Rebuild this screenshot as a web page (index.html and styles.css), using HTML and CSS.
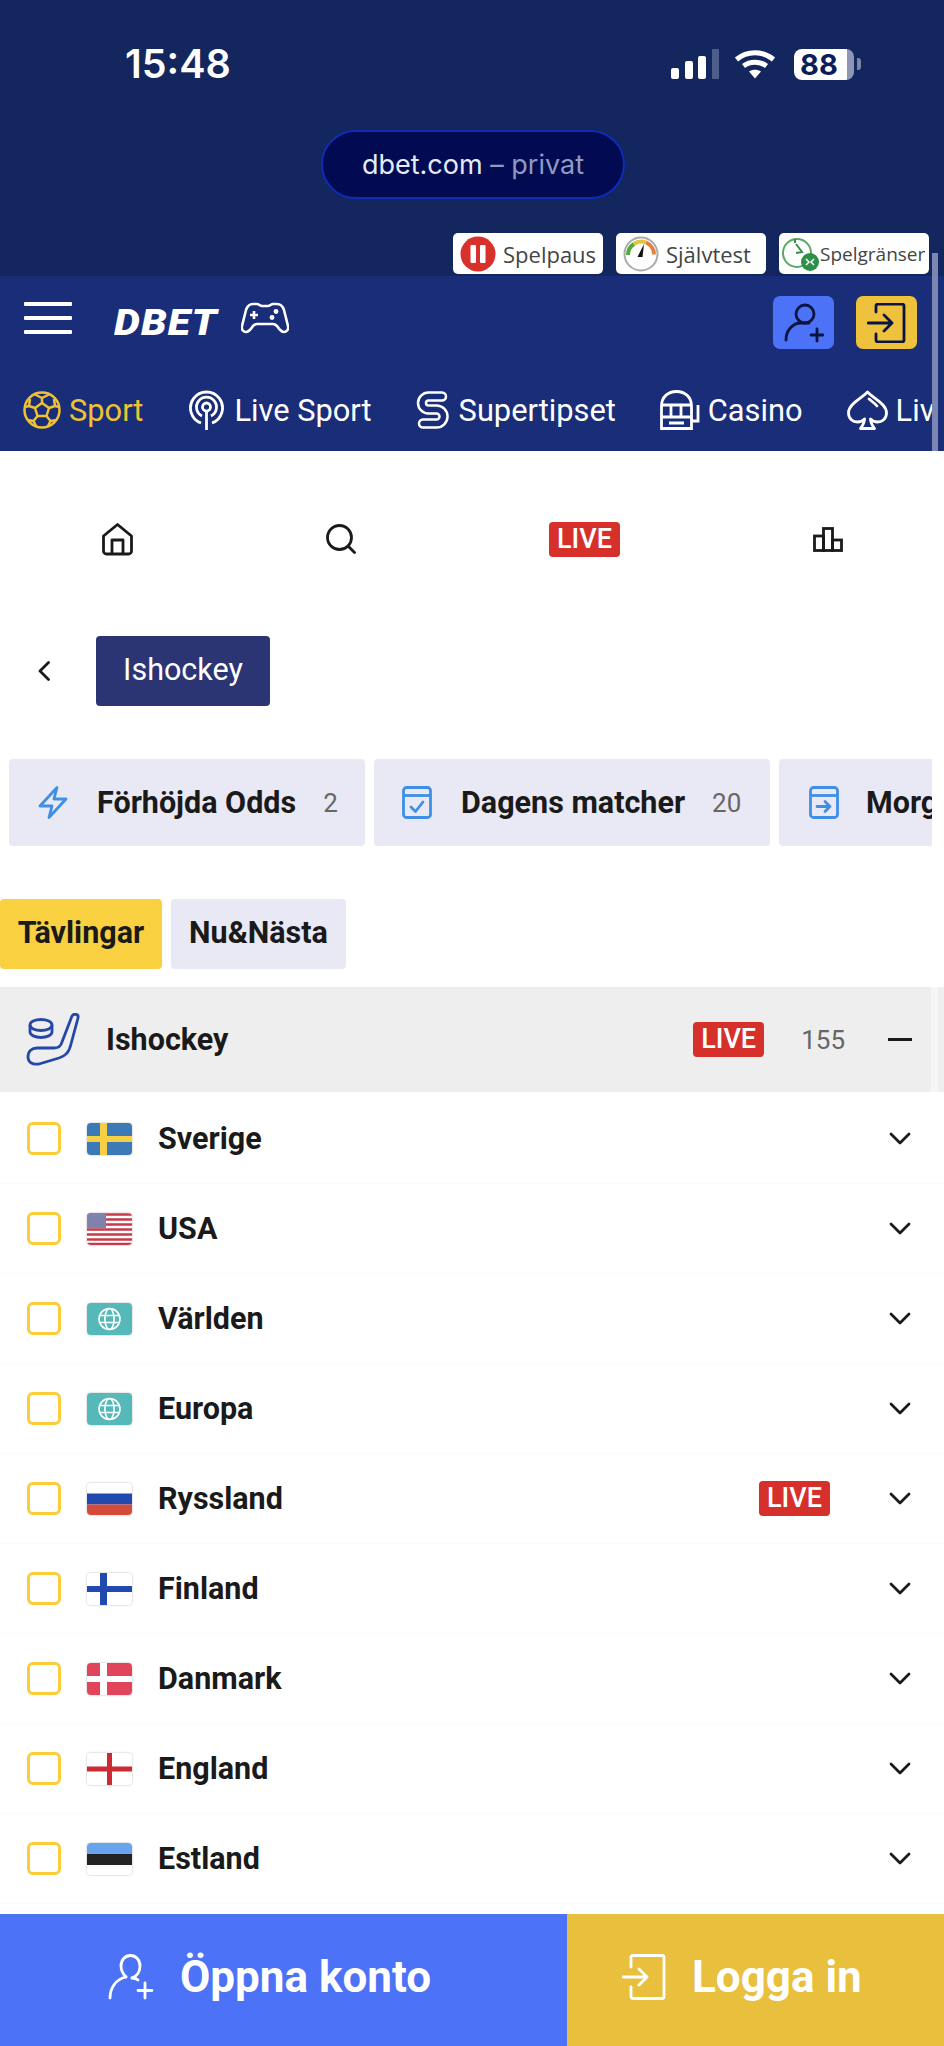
FILE: index.html
```html
<!DOCTYPE html>
<html lang="sv">
<head>
  <meta charset="UTF-8" />
  <meta name="viewport" content="width=device-width, initial-scale=1.0"/>
  <title>DBET - Ishockey</title>
  <link rel="stylesheet" href="styles.css">
</head>
<body>
  <svg class="defs" width="0" height="0">
    <symbol id="chevron" viewBox="0 0 22 14"><path d="M2 2l9 9 9-9" fill="none" stroke="#1a1a1a" stroke-width="2.8" stroke-linecap="round" stroke-linejoin="round"/></symbol>
    <symbol id="globe" viewBox="0 0 45 32">
      <rect width="45" height="32" fill="#55b8b9"/>
      <g fill="none" stroke="#fff" stroke-width="1.6"><circle cx="22.5" cy="16" r="10.5"/><ellipse cx="22.5" cy="16" rx="4.6" ry="10.5"/><path d="M12.5 12.5h20M12.5 19.5h20"/></g>
    </symbol>
  </svg>

  <div class="top">
    <div class="status">
      <span class="time">15:48</span>
      <div class="status-icons">
        <svg class="signal" width="48" height="30" viewBox="0 0 48 30">
          <rect x="0" y="19" width="8" height="11" rx="2" fill="#fff"/>
          <rect x="14" y="12" width="8" height="18" rx="2" fill="#fff"/>
          <rect x="27" y="7" width="8" height="23" rx="2" fill="#fff"/>
          <rect x="41" y="0" width="7" height="30" rx="1" fill="#4e5d8c"/>
        </svg>
        <svg class="wifi" width="42" height="30" viewBox="0 0 42 30">
          <g fill="none" stroke="#fff" stroke-width="5" stroke-linecap="butt">
            <path d="M2.5 10.5c10.500-9 26.500-9 37 0"/>
            <path d="M9.500 17c6.500-5 16.500-5 23 0"/>
          </g>
          <path d="M15 22.500c3.500-2.500 8.500-2.500 12 0l-6 7z" fill="#fff"/>
        </svg>
        <span class="battery">88</span>
        <span class="battery-nub"></span>
      </div>
    </div>
    <div class="url-pill">dbet.com <span class="url-private">– privat</span></div>
    <div class="badges">
      <div class="badge">
        <svg width="36" height="36" viewBox="0 0 36 36"><circle cx="18" cy="18" r="17.500" fill="#d8302a"/><rect x="10.500" y="9" width="5.500" height="18" rx="1" fill="#fff"/><rect x="20" y="9" width="5.500" height="18" rx="1" fill="#fff"/></svg>
        <span>Spelpaus</span>
      </div>
      <div class="badge">
        <svg width="36" height="36" viewBox="0 0 36 36">
          <circle cx="18" cy="18" r="16.500" fill="#fff" stroke="#a9aca6" stroke-width="2"/>
          <path d="M5 19a13 13 0 0 1 6-11" fill="none" stroke="#58a83e" stroke-width="4"/>
          <path d="M11 8a13 13 0 0 1 12-1.500" fill="none" stroke="#e7c53a" stroke-width="4"/>
          <path d="M23 6.500a13 13 0 0 1 8 12" fill="none" stroke="#e5813a" stroke-width="4"/>
          <path d="M21 8l-1.500 13h-5z" fill="#111"/>
        </svg>
        <span>Självtest</span>
      </div>
      <div class="badge badge-narrow">
        <svg width="38" height="36" viewBox="0 0 38 36">
          <circle cx="15" cy="17" r="14" fill="#fff" stroke="#57a868" stroke-width="2"/>
          <path d="M14 8l6 8-6 1M13 3v4" fill="none" stroke="#3a8c4e" stroke-width="2"/>
          <circle cx="28" cy="26" r="9" fill="#2e8f48"/>
          <path d="M24 23l3 3-3 3M32 23l-3 3 3 3" fill="none" stroke="#fff" stroke-width="1.500"/>
        </svg>
        <span>Spelgränser</span>
      </div>
    </div>
  </div>

  <header class="site-header">
    <div class="header-row">
      <div class="hamburger"><span></span><span></span><span></span></div>
      <span class="logo">DBET</span>
      <svg class="gamepad" width="48" height="32" viewBox="0 0 48 32">
        <path d="M12 2h4c2 0 3 2 5 2h6c2 0 3-2 5-2h4c4 0 6 3 7 6l4 16c1 4-2 6-4 6-3 0-5-3-7-6-1-1-2-2-4-2H16c-2 0-3 1-4 2-2 3-4 6-7 6-2 0-5-2-4-6L5 8c1-3 3-6 7-6z" fill="none" stroke="#fff" stroke-width="2.600"/>
        <path d="M13 9v8M9 13h8" stroke="#fff" stroke-width="2.600"/>
        <circle cx="35" cy="9.500" r="2.400" fill="#fff"/><circle cx="31" cy="15.500" r="2.400" fill="#fff"/>
      </svg>
      <div class="header-buttons">
        <div class="square-btn square-blue">
          <svg width="40" height="42" viewBox="0 0 40 42"><g fill="none" stroke="#0b1440" stroke-width="2.800" stroke-linecap="round"><circle cx="21" cy="12" r="9"/><path d="M2 38c0-10 7-17 15-17h8"/><path d="M33 27v12M27 33h12"/></g></svg>
        </div>
        <div class="square-btn square-yellow">
          <svg width="40" height="40" viewBox="0 0 40 40"><g fill="none" stroke="#0b1440" stroke-width="2.800" stroke-linecap="round" stroke-linejoin="round"><path d="M9 9V3a2 2 0 0 1 2-2h24a2 2 0 0 1 2 2v34a2 2 0 0 1-2 2H11a2 2 0 0 1-2-2v-6"/><path d="M1 20h24M17 12l8 8-8 8"/></g></svg>
        </div>
      </div>
    </div>
    <nav class="main-nav">
      <a class="nav-item nav-active">
        <svg width="38" height="38" viewBox="0 0 38 38"><g fill="none" stroke="#efc232" stroke-width="2.500" stroke-linejoin="round"><circle cx="19" cy="19" r="17.500"/><path d="M19 12l7 5-2.500 8h-9L12 17z"/><path d="M19 12V7M26 17l6-2M23.500 25l4 5M14.500 25l-4 5M12 17l-6-2M12 3.500L19 7l7-3.500M32 15l4 1M32 15l-1-7M27.500 30l6-1M27.500 30l-3 6M10.500 30l-6-1M10.500 30l3 6M6 15l-4 1M6 15l1-7"/></g></svg>
        <span>Sport</span>
      </a>
      <a class="nav-item nav-wide">
        <svg width="35" height="40" viewBox="0 0 35 40"><g fill="none" stroke="#fff" stroke-width="2.800"><path d="M12 33a16 16 0 1 1 11 0"/><path d="M13 26a10 10 0 1 1 9 0"/><circle cx="17.500" cy="17" r="4"/><path d="M17.500 21v19"/></g></svg>
        <span>Live Sport</span>
      </a>
      <a class="nav-item nav-wide nav-super">
        <svg width="33" height="40" viewBox="0 0 33 40"><g fill="none" stroke-linecap="round" stroke-linejoin="round"><path d="M26 6.500H12.500a6.500 6.500 0 0 0 0 13h8a7 7 0 0 1 0 14H7" stroke="#fff" stroke-width="10.500"/><path d="M26 6.500H12.500a6.500 6.500 0 0 0 0 13h8a7 7 0 0 1 0 14H7" stroke="#1a2d78" stroke-width="5.500"/></g></svg>
        <span>Supertipset</span>
      </a>
      <a class="nav-item nav-casino">
        <svg width="40" height="40" viewBox="0 0 40 40"><g fill="none" stroke="#fff" stroke-width="2.800"><path d="M1.500 38.500V16C1.500 7 8 1.500 16.500 1.500S31.500 7 31.500 16v22.500z"/><path d="M1.500 15h30M1.500 27h30M11 15v12M21 15v12M9 33h15"/><path d="M31.500 31H38V15"/></g></svg>
        <span>Casino</span>
      </a>
      <a class="nav-item nav-spade">
        <svg width="41" height="40" viewBox="0 0 41 40"><g fill="none" stroke="#fff" stroke-width="2.800" stroke-linejoin="round"><path d="M20.500 2C27 9 39.500 14 39.500 23c0 6-4.500 9-9 9-3 0-5-1-7-3 0 4 1.500 6 4 9.500h-14c2.500-3.500 4-5.500 4-9.500-2 2-4 3-7 3-4.500 0-9-3-9-9C1.500 14 14 9 20.500 2z"/><path d="M22 9c3 2.500 6 4.500 8 7" stroke-linecap="round"/></g></svg>
        <span>Live</span>
      </a>
    </nav>
  </header>
  <div class="scroll-thumb"></div>

  <div class="sub-nav">
    <svg width="31" height="33" viewBox="0 0 31 33"><g fill="none" stroke="#1a1a1a" stroke-width="2.800" stroke-linejoin="round"><path d="M1.500 13L15.500 1.500 29.500 13v15a3 3 0 0 1-3 3h-22a3 3 0 0 1-3-3z"/><path d="M10 31V17h11v14"/></g></svg>
    <svg width="30" height="30" viewBox="0 0 30 30"><g fill="none" stroke="#1a1a1a" stroke-width="2.800" stroke-linecap="round"><circle cx="13.500" cy="13.500" r="12"/><path d="M22 22l6.500 6.500"/></g></svg>
    <span class="live live-big">LIVE</span>
    <svg width="30" height="25" viewBox="0 0 30 25"><g fill="none" stroke="#1a1a1a" stroke-width="2.800"><rect x="1.500" y="9" width="9" height="14.500"/><rect x="10.500" y="1.500" width="9" height="22"/><rect x="19.500" y="13" width="9" height="10.500"/></g></svg>
  </div>

  <div class="breadcrumb">
    <svg width="14" height="20" viewBox="0 0 14 20"><path d="M11.500 1.500L3 10l8.500 8.500" fill="none" stroke="#1a1a1a" stroke-width="2.800" stroke-linecap="round" stroke-linejoin="round"/></svg>
    <span class="crumb">Ishockey</span>
  </div>

  <div class="chips">
    <div class="chip chip-first">
      <svg width="30" height="33" viewBox="0 0 30 33"><path d="M19 1.500L2 20h12l-3 11.500L28 13H16z" fill="none" stroke="#3f8fe6" stroke-width="2.800" stroke-linejoin="round"/></svg>
      <span class="chip-name">Förhöjda Odds</span>
      <span class="chip-count">2</span>
    </div>
    <div class="chip chip-second">
      <svg width="30" height="33" viewBox="0 0 30 33"><g fill="none" stroke="#3f8fe6" stroke-width="2.800" stroke-linejoin="round"><rect x="1.500" y="1.500" width="27" height="30" rx="3"/><path d="M1.500 9.500h27"/><path d="M9 21l4.500 4.500L21 16" stroke-linecap="round"/></g></svg>
      <span class="chip-name">Dagens matcher</span>
      <span class="chip-count">20</span>
    </div>
    <div class="chip chip-third">
      <svg width="30" height="33" viewBox="0 0 30 33"><g fill="none" stroke="#3f8fe6" stroke-width="2.800" stroke-linejoin="round"><rect x="1.500" y="1.500" width="27" height="30" rx="3"/><path d="M1.500 9.500h27"/><path d="M8 20.500h13M16 15.500l5 5-5 5" stroke-linecap="round"/></g></svg>
      <span class="chip-name">Morgondagens</span>
    </div>
  </div>

  <div class="tabs">
    <span class="tab tab-active">Tävlingar</span>
    <span class="tab">Nu&amp;Nästa</span>
  </div>

  <div class="sport-head">
    <svg width="54" height="53" viewBox="0 0 54 53"><g fill="none" stroke="#2548a8" stroke-width="2.800" stroke-linejoin="round"><path d="M46 3c2-3 7-2 6 2l-7 26c-2 9-6 12-12 14L13 51c-7 1-11-2-11-7 0-6 4-9 9-9h17c5 0 7-2 8-6z"/><ellipse cx="15" cy="12" rx="11" ry="5.500"/><path d="M4 12v7c0 3 5 5.500 11 5.500S26 22 26 19v-7"/></g></svg>
    <span class="sport-name">Ishockey</span>
    <span class="live">LIVE</span>
    <span class="sport-count">155</span>
    <span class="minus"></span>
  </div>
  <div class="side-strip"></div>

  <div class="list">
    <div class="row">
      <span class="check"></span>
      <svg class="flag" viewBox="0 0 45 32"><rect width="45" height="32" fill="#3b7ab7"/><path d="M13 0h7v32h-7zM0 13h45v6H0z" fill="#f6cf45"/></svg>
      <span class="name">Sverige</span>
      <svg class="chev" width="22" height="14"><use href="#chevron"/></svg>
    </div>
    <div class="row">
      <span class="check"></span>
      <svg class="flag" viewBox="0 0 45 32">
        <rect width="45" height="32" fill="#fff"/>
        <path d="M0 1.500h45M0 6.500h45M0 11.500h45M0 16.500h45M0 21.500h45M0 26.500h45M0 31h45" stroke="#c9394a" stroke-width="2.400"/>
        <rect width="19" height="15" fill="#7f82ad"/>
      </svg>
      <span class="name">USA</span>
      <svg class="chev" width="22" height="14"><use href="#chevron"/></svg>
    </div>
    <div class="row">
      <span class="check"></span>
      <svg class="flag" viewBox="0 0 45 32"><use href="#globe"/></svg>
      <span class="name">Världen</span>
      <svg class="chev" width="22" height="14"><use href="#chevron"/></svg>
    </div>
    <div class="row">
      <span class="check"></span>
      <svg class="flag" viewBox="0 0 45 32"><use href="#globe"/></svg>
      <span class="name">Europa</span>
      <svg class="chev" width="22" height="14"><use href="#chevron"/></svg>
    </div>
    <div class="row">
      <span class="check"></span>
      <svg class="flag" viewBox="0 0 45 32"><rect width="45" height="32" fill="#fff"/><rect y="10.500" width="45" height="11" fill="#2149b0"/><rect y="21.500" width="45" height="10.500" fill="#d44b3c"/></svg>
      <span class="name">Ryssland</span>
      <span class="live row-live">LIVE</span>
      <svg class="chev" width="22" height="14"><use href="#chevron"/></svg>
    </div>
    <div class="row">
      <span class="check"></span>
      <svg class="flag" viewBox="0 0 45 32"><rect width="45" height="32" fill="#fff"/><path d="M13 0h7v32h-7zM0 13h45v6H0z" fill="#2149b0"/></svg>
      <span class="name">Finland</span>
      <svg class="chev" width="22" height="14"><use href="#chevron"/></svg>
    </div>
    <div class="row">
      <span class="check"></span>
      <svg class="flag" viewBox="0 0 45 32"><rect width="45" height="32" fill="#e0455c"/><path d="M13 0h7v32h-7zM0 13h45v6H0z" fill="#fff"/></svg>
      <span class="name">Danmark</span>
      <svg class="chev" width="22" height="14"><use href="#chevron"/></svg>
    </div>
    <div class="row">
      <span class="check"></span>
      <svg class="flag" viewBox="0 0 45 32"><rect width="45" height="32" fill="#fff"/><path d="M20 0h5v32h-5zM0 13.500h45v5H0z" fill="#cc2b33"/></svg>
      <span class="name">England</span>
      <svg class="chev" width="22" height="14"><use href="#chevron"/></svg>
    </div>
    <div class="row">
      <span class="check"></span>
      <svg class="flag" viewBox="0 0 45 32"><rect width="45" height="32" fill="#fff"/><rect width="45" height="11" fill="#68a5ee"/><rect y="11" width="45" height="11" fill="#232323"/></svg>
      <span class="name">Estland</span>
      <svg class="chev" width="22" height="14"><use href="#chevron"/></svg>
    </div>
  </div>

  <div class="bottom-bar">
    <div class="bottom-btn bottom-blue">
      <svg width="46" height="46" viewBox="0 0 46 46"><g fill="none" stroke="#fff" stroke-width="2.800" stroke-linecap="round"><path d="M24 24c5-2 8-6 8-12 0-6-4-10.500-9.500-10.500S13 6 13 12c0 5 2 8 5 11"/><path d="M2 44c0-10 6-19 16-21"/><path d="M24 24c3 0 5 1 6 2"/><path d="M37 29v15M30 36.500h14"/></g></svg>
      <span>Öppna konto</span>
    </div>
    <div class="bottom-btn bottom-yellow">
      <svg width="44" height="46" viewBox="0 0 44 46"><g fill="none" stroke="#fff" stroke-width="2.800" stroke-linecap="round" stroke-linejoin="round"><path d="M9 13V3.500a2 2 0 0 1 2-2h29a2 2 0 0 1 2 2v39a2 2 0 0 1-2 2H11a2 2 0 0 1-2-2V33"/><path d="M1 23h24M17 15l8 8-8 8"/></g></svg>
      <span>Logga in</span>
    </div>
  </div>
</body>
</html>
```
FILE: styles.css
```css
* {
  margin: 0;
  padding: 0;
  box-sizing: border-box;
  font-family: 'Roboto', 'Liberation Sans', sans-serif;
}

body {
  width: 944px;
  height: 2046px;
  overflow: hidden;
  position: relative;
  display: flex;
  flex-direction: column;
  background-color: #fff;
  color: #1a1a1a;
}

.defs {
  position: absolute;
}

/* phone chrome */
.top {
  height: 276px;
  padding-top: 44px;
  background-color: #13265e;
}

.status {
  height: 40px;
  padding: 0 83px 0 125px;
  display: flex;
  align-items: center;
  justify-content: space-between;
}

.time {
  color: #fff;
  font-family: 'Inter', sans-serif;
  font-size: 39.5px;
  font-weight: 600;
}

.status-icons {
  display: flex;
  align-items: center;
}

.wifi {
  margin-left: 15px;
}

.battery {
  width: 60px;
  height: 31px;
  margin-left: 18px;
  border-radius: 8px;
  background: linear-gradient(to right, #fff 88%, #8d97b3 88%);
  color: #0b1c5c;
  font-family: 'Inter', sans-serif;
  font-size: 29px;
  font-weight: 700;
  line-height: 31px;
  padding-left: 6px;
}

.battery-nub {
  width: 4px;
  height: 12px;
  margin-left: 3px;
  border-radius: 0 3px 3px 0;
  background-color: #7c87a8;
}

.url-pill {
  width: 304px;
  height: 69px;
  margin: 46px 0 0 321px;
  border: 2px solid #0e2cb4;
  border-radius: 35px;
  background-color: #020b52;
  color: #e6eaf6;
  font-family: 'Inter', sans-serif;
  font-size: 27px;
  line-height: 65px;
  text-align: center;
}

.url-private {
  font-family: 'Inter', sans-serif;
  color: #8f9abf;
}

.badges {
  margin-top: 34px;
  padding-right: 15px;
  display: flex;
  justify-content: flex-end;
  gap: 13px;
}

.badge {
  width: 150px;
  height: 41px;
  padding-left: 7px;
  display: flex;
  align-items: center;
  gap: 7px;
  border-radius: 5px;
  background-color: #fff;
  color: #444;
}

.badge span {
  font-family: 'Open Sans', sans-serif;
  font-size: 22px;
}

.badge-narrow {
  padding-left: 3px;
  gap: 0;
}

.badge-narrow span {
  font-size: 19px;
}

/* site header */
.site-header {
  height: 175px;
  background-color: #1a2d78;
}

.header-row {
  height: 53px;
  margin-top: 20px;
  padding: 0 27px 0 24px;
  display: flex;
  align-items: center;
}

.hamburger {
  width: 48px;
  margin-bottom: 9px;
  display: flex;
  flex-direction: column;
  gap: 10px;
}

.hamburger span {
  height: 4px;
  border-radius: 1px;
  background-color: #fff;
}

.logo {
  margin-left: 42px;
  color: #fff;
  font-size: 37px;
  font-weight: 900;
  font-style: italic;
  letter-spacing: 1px;
  transform: scaleX(1.11);
  transform-origin: left center;
}

.gamepad {
  margin-left: 34px;
  margin-bottom: 9px;
}

.header-buttons {
  margin-left: auto;
  display: flex;
  gap: 22px;
}

.square-btn {
  width: 61px;
  height: 53px;
  border-radius: 7px;
  display: flex;
  align-items: center;
  justify-content: center;
}

.square-blue {
  background-color: #4b72f7;
}

.square-yellow {
  background-color: #efc23e;
}

.main-nav {
  height: 82px;
  margin-top: 20px;
  padding-left: 23px;
  width: 932px;
  overflow: hidden;
  display: flex;
  align-items: center;
  gap: 46px;
  color: #fff;
  font-size: 30.8px;
}

.nav-item {
  display: flex;
  flex: none;
  align-items: center;
  gap: 8px;
}

.nav-wide {
  gap: 10px;
}

.nav-super {
  margin-left: -2px;
}

.nav-casino {
  margin-left: -2px;
}

.nav-spade {
  margin-left: -2px;
}

.nav-active {
  color: #efc232;
}

.scroll-thumb {
  position: absolute;
  left: 932px;
  top: 253px;
  width: 6px;
  height: 198px;
  background-color: #7b86b3;
}

.live {
  width: 71px;
  height: 35px;
  flex: none;
  border-radius: 4px;
  background-color: #d6302a;
  color: #fff;
  font-size: 27px;
  font-weight: 500;
  line-height: 35px;
  text-align: center;
}

.sub-nav {
  height: 176px;
  padding: 0 101px 0 102px;
  display: flex;
  align-items: center;
  justify-content: space-between;
}

.breadcrumb {
  height: 70px;
  margin-top: 9px;
  padding-left: 37px;
  display: flex;
  align-items: center;
  gap: 45px;
}

.crumb {
  width: 174px;
  height: 70px;
  border-radius: 4px;
  background-color: #2b3573;
  color: #fff;
  font-size: 30.5px;
  line-height: 68px;
  text-align: center;
}

.chips {
  width: 932px;
  height: 87px;
  margin-top: 53px;
  padding-left: 9px;
  overflow: hidden;
  display: flex;
  gap: 9px;
}

.chip {
  flex: none;
  padding-left: 29px;
  display: flex;
  align-items: center;
  border-radius: 4px;
  background-color: #e8e9f5;
}

.chip-first {
  width: 356px;
}

.chip-second {
  width: 396px;
  padding-left: 28px;
}

.chip-third {
  width: 300px;
  padding-left: 30px;
}

.chip-name {
  margin-left: 29px;
  font-size: 30.5px;
  font-weight: 700;
}

.chip-third .chip-name {
  margin-left: 27px;
}

.chip-count {
  margin-left: 27px;
  color: #666;
  font-size: 26px;
}

.tabs {
  height: 70px;
  margin-top: 53px;
  display: flex;
  gap: 9px;
}

.tab {
  width: 175px;
  border-radius: 4px;
  background-color: #e8e9f5;
  font-size: 30.5px;
  font-weight: 700;
  line-height: 68px;
  text-align: center;
}

.tab-active {
  width: 162px;
  background-color: #f9d040;
}

.sport-head {
  height: 105px;
  margin-top: 18px;
  padding: 0 32px 0 26px;
  display: flex;
  align-items: center;
  background-color: #eeeeee;
}

.sport-name {
  margin-left: 26px;
  font-size: 30.5px;
  font-weight: 700;
}

.sport-head .live {
  margin-left: auto;
}

.sport-count {
  margin-left: 37px;
  color: #666;
  font-size: 26px;
}

.minus {
  width: 24px;
  height: 3px;
  margin-left: 43px;
  background-color: #1a1a1a;
}

.side-strip {
  position: absolute;
  left: 931px;
  top: 987px;
  width: 7px;
  height: 105px;
  background-color: #f6f6f6;
}

.list {
  flex: 1;
  padding-top: 2px;
}

.row {
  height: 90px;
  padding: 0 33px 0 27px;
  display: flex;
  align-items: center;
  border-bottom: 1px solid #fbfbfb;
}

.check {
  width: 34px;
  height: 33px;
  border: 3.5px solid #fbcd38;
  border-radius: 6px;
}

.flag {
  width: 45px;
  height: 32px;
  margin-left: 26px;
  border-radius: 4px;
  box-shadow: 0 0 2px rgba(0, 0, 0, 0.35);
}

.name {
  margin-left: 26px;
  font-size: 30.5px;
  font-weight: 700;
}

.chev {
  margin-left: auto;
}

.row-live {
  margin-left: auto;
}

.row-live + .chev {
  margin-left: 59px;
}

.bottom-bar {
  height: 132px;
  flex: none;
  display: flex;
}

.bottom-btn {
  padding-bottom: 6px;
  display: flex;
  align-items: center;
  gap: 26px;
  color: #fff;
  font-size: 44px;
  font-weight: 700;
}

.bottom-blue {
  width: 567px;
  padding-left: 108px;
  background-color: #4b72f7;
}

.bottom-yellow {
  width: 377px;
  padding-left: 55px;
  background-color: #e9c03e;
}
```
